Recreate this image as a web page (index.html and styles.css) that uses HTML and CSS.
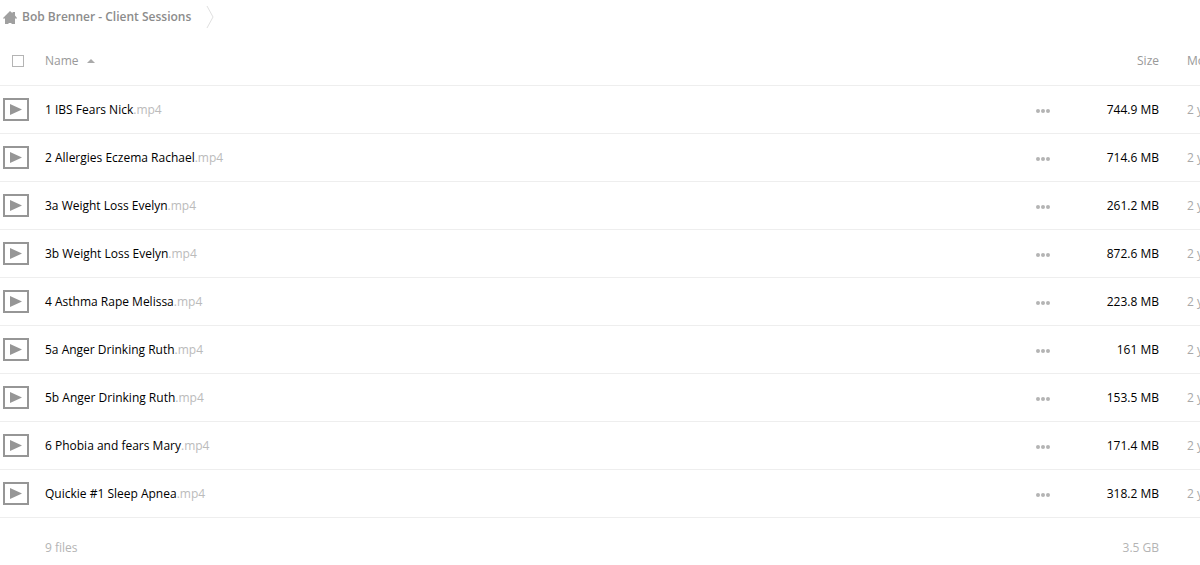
FILE: index.html
```html
<!DOCTYPE html>
<html lang="en">
<head>
  <meta charset="utf-8">
  <title>Bob Brenner - Client Sessions</title>
  <link rel="stylesheet" href="styles.css">
</head>
<body>
  <svg class="sprites" width="0" height="0" aria-hidden="true">
    <symbol id="icon-video" viewBox="0 0 26 23">
      <rect x="1" y="1" width="24" height="21" fill="none" stroke="#969696" stroke-width="2"/>
      <path d="M7 6v11l12-5.5z" fill="#969696"/>
    </symbol>
    <symbol id="icon-more" viewBox="0 0 14 4">
      <circle cx="2" cy="2" r="2"/>
      <circle cx="7" cy="2" r="2"/>
      <circle cx="12" cy="2" r="2"/>
    </symbol>
  </svg>

  <nav class="breadcrumb">
    <a href="#" class="crumb">
      <svg class="home" viewBox="0 0 14 13" aria-hidden="true">
        <path d="M7 0l2.500 2.300V1H12v3.500l2 2.500v.5h-2V13H8.500v-1h-3v1H2V7.500H0V7z"/>
      </svg>
      <span>Bob Brenner - Client Sessions</span>
    </a>
    <svg class="separator" viewBox="0 0 8 24" aria-hidden="true">
      <path d="M1 1l6 11-6 11"/>
    </svg>
  </nav>

  <div class="files">
    <table id="filestable">
      <thead>
        <tr>
          <th class="select"><input type="checkbox" id="selectAll" aria-label="Select all"></th>
          <th class="name"><button type="button" class="sort">Name <span class="arrow"></span></button></th>
          <th class="actions"></th>
          <th class="size">Size</th>
          <th class="date">Modified</th>
        </tr>
      </thead>
      <tbody id="fileList"></tbody>
      <tfoot>
        <tr>
          <td></td>
          <td class="name">9 files</td>
          <td></td>
          <td class="size">3.5 GB</td>
          <td></td>
        </tr>
      </tfoot>
    </table>
  </div>
  <script src="files.js"></script>
</body>
</html>
```

FILE: styles.css
```css
body {
  margin: 0;
  background-color: #fff;
  font-family: "Open Sans", "Noto Sans", sans-serif;
  font-size: 12px;
  line-height: 20px;
  color: #000;
}

a {
  color: inherit;
  text-decoration: none;
}

button {
  padding: 0;
  border: none;
  background: none;
  font: inherit;
  color: inherit;
  cursor: pointer;
}

.sprites {
  position: absolute;
}

/* breadcrumb */
.breadcrumb {
  display: flex;
  align-items: center;
  height: 34px;
  padding-left: 3px;
}

.crumb {
  display: flex;
  align-items: center;
  gap: 5px;
  font-weight: 600;
  color: #8c8c8c;
}

.home {
  width: 14px;
  height: 13px;
  fill: #a0a0a0;
}

.separator {
  width: 8px;
  height: 24px;
  margin-left: 15px;
  fill: none;
  stroke: #e0e0e0;
}

/* file table, the date column runs past the window */
.files {
  overflow: hidden;
}

table {
  width: calc(100% + 120px);
  table-layout: fixed;
  border-collapse: separate;
  border-spacing: 0;
}

th, td {
  box-sizing: border-box;
  height: 48px;
  padding: 0;
  border-bottom: 1px solid #eee;
  font-weight: normal;
  text-align: left;
  vertical-align: middle;
  white-space: nowrap;
}

th {
  height: 52px;
  padding-top: 3px;
  color: #999;
}

.select {
  width: 45px;
}

.select input {
  display: block;
  appearance: none;
  width: 12px;
  height: 12px;
  margin: 0 0 0 12px;
  border: 1px solid #b4b4b4;
  background-color: #fff;
}

.sort {
  display: flex;
  align-items: center;
  gap: 8px;
}

.arrow {
  border: 4px solid transparent;
  border-top: none;
  border-bottom-color: #aaa;
}

.icon svg {
  display: block;
  width: 26px;
  height: 23px;
  margin-left: 3px;
}

.ext {
  color: #bbb;
}

.actions {
  width: 38px;
}

.more {
  display: block;
  margin: 2px auto 0;
}

.more svg {
  display: block;
  width: 14px;
  height: 4px;
  fill: #b4b4b4;
}

.size {
  width: 97px;
  text-align: right;
}

.date {
  width: 161px;
  padding-left: 28px;
}

td.date {
  color: #a8a8a8;
}

tfoot td {
  height: 60px;
  border-bottom: none;
  color: #b4b4b4;
}
```

FILE: files.js
```js
var files = [
  { name: "1 IBS Fears Nick", size: "744.9 MB" },
  { name: "2 Allergies Eczema Rachael", size: "714.6 MB" },
  { name: "3a Weight Loss Evelyn", size: "261.2 MB" },
  { name: "3b Weight Loss Evelyn", size: "872.6 MB" },
  { name: "4 Asthma Rape Melissa", size: "223.8 MB" },
  { name: "5a Anger Drinking Ruth", size: "161 MB" },
  { name: "5b Anger Drinking Ruth", size: "153.5 MB" },
  { name: "6 Phobia and fears Mary", size: "171.4 MB" },
  { name: "Quickie #1 Sleep Apnea", size: "318.2 MB" }
];

var rows = "";
files.forEach(function(file) {
  rows += "<tr>" +
    "<td class='icon'><svg aria-hidden='true'><use href='#icon-video'/></svg></td>" +
    "<td class='name'><a href='#'>" + file.name + "<span class='ext'>.mp4</span></a></td>" +
    "<td class='actions'><button type='button' class='more' aria-label='More'><svg><use href='#icon-more'/></svg></button></td>" +
    "<td class='size'>" + file.size + "</td>" +
    "<td class='date'>2 years ago</td>" +
    "</tr>";
});
document.getElementById("fileList").innerHTML = rows;
```
